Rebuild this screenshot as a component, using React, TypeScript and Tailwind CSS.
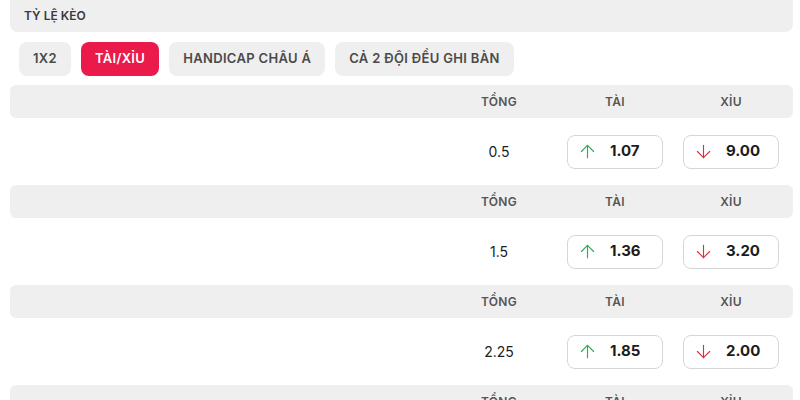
import { ArrowUp, ArrowDown } from 'lucide-react';

interface OddsRow {
  readonly total: string;
  readonly over: string;
  readonly under: string;
}

const rows: readonly OddsRow[] = [
  { total: '0.5', over: '1.07', under: '9.00' },
  { total: '1.5', over: '1.36', under: '3.20' },
  { total: '2.25', over: '1.85', under: '2.00' },
  { total: '2.5', over: '2.10', under: '1.72' },
];

const tabs = ['1X2', 'TÀI/XỈU', 'HANDICAP CHÂU Á', 'CẢ 2 ĐỘI ĐỀU GHI BÀN'];

function OddButton({ value, up }: { value: string; up: boolean }) {
  return (
    <button className="flex h-[34px] w-[96px] items-center gap-[12px] rounded-lg border border-[#d6d6d6] bg-white pl-[9px]">
      {up ? (
        <ArrowUp className="h-[21px] w-[21px] text-[#3aa655]" strokeWidth={1.3} />
      ) : (
        <ArrowDown className="h-[21px] w-[21px] text-[#d8333a]" strokeWidth={1.3} />
      )}
      <span className="text-[15px] font-bold text-[#1c1c1c]">{value}</span>
    </button>
  );
}

export default function App() {
  return (
    <div className="h-[400px] w-[800px] overflow-hidden bg-white font-['Inter',sans-serif]">
      <div className="mx-[10px] mr-[7px] flex h-[32px] items-center rounded-b-lg bg-[#efefef] pl-[14px]">
        <span className="text-[12px] font-semibold text-[#3a3a3a]">TỶ LỆ KÈO</span>
      </div>
      <div className="mt-[10px] flex gap-[10px] pl-[19px]">
        {tabs.map((tab) => (
          <button
            key={tab}
            className={
              tab === 'TÀI/XỈU'
                ? 'h-[34px] rounded-lg bg-[#ea1a4b] px-[14px] text-[13px] font-semibold tracking-wide text-white'
                : 'h-[34px] rounded-lg bg-[#efefef] px-[14px] text-[13px] font-semibold tracking-wide text-[#4a4a4a]'
            }
          >
            {tab}
          </button>
        ))}
      </div>
      <div className="mt-[9px] ml-[10px] mr-[7px]">
        {rows.map((row) => (
          <div key={row.total}>
            <div className="flex h-[33px] items-center rounded-md bg-[#efefef] pr-[4px]">
              <div className="flex-1" />
              <span className="w-[116px] text-center text-[12px] font-semibold tracking-wide text-[#555]">TỔNG</span>
              <span className="w-[116px] text-center text-[12px] font-semibold tracking-wide text-[#555]">TÀI</span>
              <span className="w-[116px] text-center text-[12px] font-semibold tracking-wide text-[#555]">XỈU</span>
            </div>
            <div className="flex h-[67px] items-center pr-[4px]">
              <div className="flex-1" />
              <span className="w-[116px] text-center text-[14px] text-[#222]">{row.total}</span>
              <div className="flex w-[116px] justify-center">
                <OddButton value={row.over} up />
              </div>
              <div className="flex w-[116px] justify-center">
                <OddButton value={row.under} up={false} />
              </div>
            </div>
          </div>
        ))}
      </div>
    </div>
  );
}
